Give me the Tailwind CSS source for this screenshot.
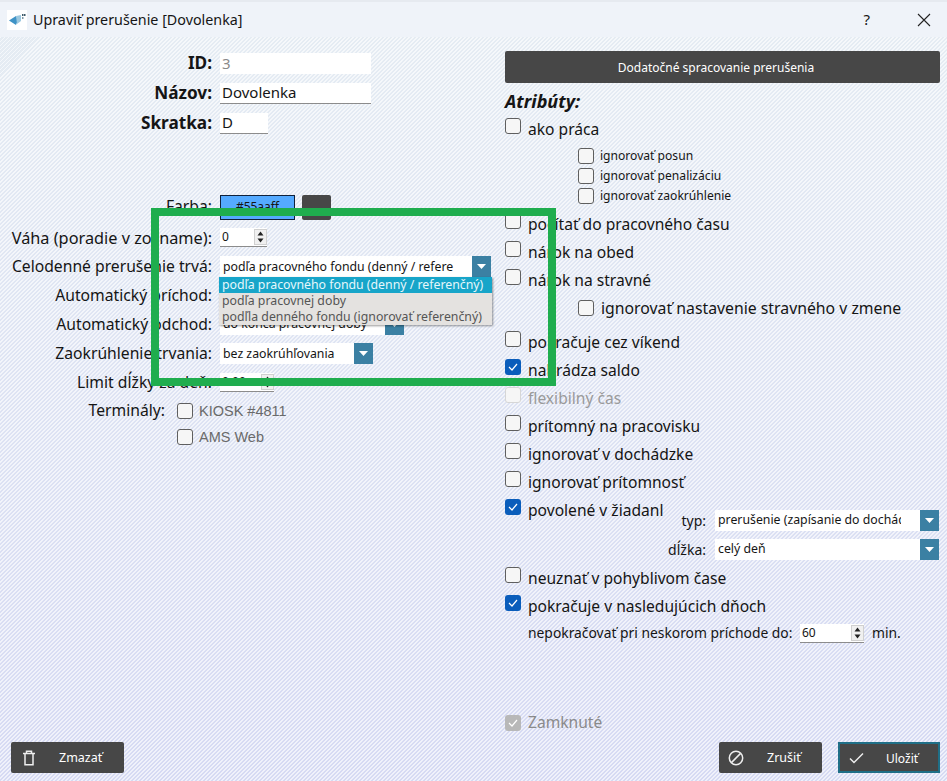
<!DOCTYPE html><html lang="sk">
<head>
  <meta charset="UTF-8">
  <title>Upraviť prerušenie</title>
  <script src="https://cdn.jsdelivr.net/npm/@tailwindcss/browser@4"></script>
</head>
<body class="m-0 overflow-hidden font-['Noto_Sans',sans-serif] text-[#151515]">
<div class="relative flex h-[781px] w-[947px] flex-col overflow-hidden bg-[linear-gradient(180deg,#e6edf3,#d6daf3)]">

  <!-- title bar -->
  <div class="flex h-[37px] shrink-0 items-center border-t-2 border-[#e6eaf0] bg-[#eff3f9] pl-[7px]">
    <div class="flex h-[20px] w-[20px] items-center justify-center bg-white">
      <svg width="18" height="14" viewBox="0 0 18 14"><path d="M1 7.500 L8 3 L10 7 L8 12 Z" fill="#3f93c6"/><path d="M8 3 L13 2 L13 8 L9 11 Z" fill="#9cc8df"/><rect x="14" y="1" width="1.500" height="2" fill="#3e5a6a"/><rect x="16" y="1" width="1.500" height="2" fill="#3e5a6a"/><rect x="14" y="4" width="1.500" height="2" fill="#7f98a6"/></svg>
    </div>
    <span class="ml-[6px] text-[14.300px]">Upraviť prerušenie [Dovolenka]</span>
    <span class="ml-auto text-[15px]">?</span>
    <svg class="mr-[16px] ml-[47px]" width="14" height="14" viewBox="0 0 14 14"><path d="M1 1 L13 13 M13 1 L1 13" stroke="#222" stroke-width="1.100" fill="none"/></svg>
  </div>

  <!-- hatch over the dialog body -->
  <div class="flex min-h-0 flex-1 flex-col bg-[repeating-linear-gradient(135deg,#ffffffa0_0,#ffffffa0_1.4px,transparent_1.4px,transparent_2.83px)]">
    <div class="flex min-h-0 flex-1">

      <!-- left column -->
      <div class="w-[505px] shrink-0 pt-[11px] text-[15.700px]">
        <div class="flex h-[30px] items-center gap-2">
          <span class="w-[212px] text-right text-[17.200px] font-bold">ID:</span>
          <div class="flex h-[21px] w-[151px] items-center bg-white px-[2px] text-[15px] text-[#8a8a8a]">3</div>
        </div>
        <div class="flex h-[30px] items-center gap-2">
          <span class="w-[212px] text-right text-[17.200px] font-bold">Názov:</span>
          <div class="flex h-[21px] w-[151px] items-center border-b border-[#8c8c8c] bg-white px-[2px] text-[15px]">Dovolenka</div>
        </div>
        <div class="flex h-[30px] items-center gap-2">
          <span class="w-[212px] text-right text-[17.200px] font-bold">Skratka:</span>
          <div class="flex h-[21px] w-[48px] items-center border-b border-[#8c8c8c] bg-white px-[2px] text-[15px]">D</div>
        </div>

        <div class="mt-[54px] flex h-[30px] items-center gap-2">
          <span class="w-[212px] text-right">Farba:</span>
          <div class="flex h-[25px] w-[75px] items-center justify-center border border-[#10213a] bg-[#55aaff] text-[12px]">#55aaff</div>
          <div class="ml-[-1px] h-[25px] w-[29px] rounded-[2px] bg-[#474747]"></div>
        </div>
        <div class="flex h-[30px] items-center gap-2 pt-[2px]">
          <span class="w-[212px] text-right text-[16.300px]">Váha (poradie v zozname):</span>
          <div class="mt-[-2px] flex h-[19px] w-[47px] items-center justify-between border-b border-[#8c8c8c] bg-white pl-[2px] text-[12px]">0
            <svg width="13" height="16" viewBox="0 0 13 16"><rect x=".5" y=".5" width="12" height="15" fill="#f0f0f0" stroke="#d0d0d0"/><path d="M3.500 6.500 L6.500 2.500 L9.500 6.500 Z M3.500 9.500 L6.500 13.500 L9.500 9.500 Z" fill="#222"/></svg>
          </div>
        </div>
        <div class="flex h-[29px] items-center gap-2">
          <span class="w-[212px] text-right">Celodenné prerušenie trvá:</span>
          <div class="flex h-[21px] w-[271px] items-center bg-white pl-[3px] text-[12.300px]">
            <span class="flex-1 overflow-hidden pt-[1px] whitespace-nowrap">podľa pracovného fondu (denný / refere</span>
            <div class="flex h-[21px] w-[19px] shrink-0 items-center justify-center bg-[#3b80a3]"><svg width="9" height="5" viewBox="0 0 9 5"><path d="M0 0 H9 L4.500 5 Z" fill="#fff"/></svg></div>
          </div>
        </div>
        <div class="flex h-[29px] items-center gap-2">
          <span class="w-[212px] text-right">Automatický príchod:</span>
          <div class="h-[21px] w-[184px] bg-white"></div>
        </div>
        <div class="flex h-[29px] items-center gap-2">
          <span class="w-[212px] text-right">Automatický odchod:</span>
          <div class="flex h-[21px] w-[184px] items-center bg-white pl-[3px] text-[12.300px]">
            <span class="flex-1 overflow-hidden whitespace-nowrap">do konca pracovnej doby</span>
            <div class="flex h-[21px] w-[19px] shrink-0 items-center justify-center bg-[#3b80a3]"><svg width="9" height="5" viewBox="0 0 9 5"><path d="M0 0 H9 L4.500 5 Z" fill="#fff"/></svg></div>
          </div>
        </div>
        <div class="flex h-[29px] items-center gap-2">
          <span class="w-[212px] text-right">Zaokrúhlenie trvania:</span>
          <div class="flex h-[21px] w-[153px] items-center bg-white pl-[3px] text-[12.300px]">
            <span class="flex-1 overflow-hidden pt-[1px] whitespace-nowrap">bez zaokrúhľovania</span>
            <div class="flex h-[21px] w-[19px] shrink-0 items-center justify-center bg-[#3b80a3]"><svg width="9" height="5" viewBox="0 0 9 5"><path d="M0 0 H9 L4.500 5 Z" fill="#fff"/></svg></div>
          </div>
        </div>
        <div class="flex h-[29px] items-center gap-2">
          <span class="w-[212px] text-right">Limit dĺžky za deň:</span>
          <div class="flex h-[19px] w-[54px] items-center justify-between border-b border-[#8c8c8c] bg-white pl-[2px] text-[12px]">0:00
            <svg width="13" height="16" viewBox="0 0 13 16"><rect x=".5" y=".5" width="12" height="15" fill="#f0f0f0" stroke="#d0d0d0"/><path d="M3.500 6.500 L6.500 2.500 L9.500 6.500 Z M3.500 9.500 L6.500 13.500 L9.500 9.500 Z" fill="#222"/></svg>
          </div>
        </div>
        <div class="flex h-[27px] items-center">
          <span class="w-[165px] text-right">Terminály:</span>
          <span class="ml-[12px] h-[16px] w-[16px] rounded-[3px] border border-[#5f5f5f] bg-[#f6f6f6]"></span>
          <span class="mt-[2px] ml-[6px] font-['Liberation_Sans',sans-serif] text-[14.500px] text-[#6a6a6a]">KIOSK #4811</span>
        </div>
        <div class="flex h-[25px] items-center pl-[177px]">
          <span class="h-[16px] w-[16px] rounded-[3px] border border-[#5f5f5f] bg-[#f6f6f6]"></span>
          <span class="mt-[2px] ml-[6px] font-['Liberation_Sans',sans-serif] text-[14.500px] text-[#6a6a6a]">AMS Web</span>
        </div>
      </div>

      <!-- right column -->
      <div class="flex w-[435px] shrink-0 flex-col pt-[14px] text-[15.600px]">
        <div class="flex h-[32px] items-center justify-center rounded-[2px] bg-[#474747] pt-[1px] pr-[13px] text-[12px] text-white">Dodatočné spracovanie prerušenia</div>
        <div class="mt-[4px] flex h-[28px] items-center text-[18px] font-bold italic">Atribúty:</div>

        <div class="flex h-[28px] items-center gap-[7px] pt-[2px]"><span class="mt-[-8px] h-[16px] w-[16px] rounded-[3px] border border-[#5f5f5f] bg-[#f6f6f6]"></span>ako práca</div>

        <div class="mt-[3px] pl-[73px] text-[12.100px]">
          <div class="flex h-[20px] items-center gap-[6px]"><span class="h-[16px] w-[16px] rounded-[3px] border border-[#5f5f5f] bg-[#f6f6f6]"></span>ignorovať posun</div>
          <div class="flex h-[20px] items-center gap-[6px]"><span class="h-[16px] w-[16px] rounded-[3px] border border-[#5f5f5f] bg-[#f6f6f6]"></span>ignorovať penalizáciu</div>
          <div class="flex h-[20px] items-center gap-[6px]"><span class="h-[16px] w-[16px] rounded-[3px] border border-[#5f5f5f] bg-[#f6f6f6]"></span>ignorovať zaokrúhlenie</div>
        </div>

        <div class="mt-[4px] flex h-[28px] items-center gap-[7px] pt-[2px]"><span class="mt-[-8px] h-[16px] w-[16px] rounded-[3px] border border-[#5f5f5f] bg-[#f6f6f6]"></span>počítať do pracovného času</div>
        <div class="flex h-[28px] items-center gap-[7px] pt-[2px]"><span class="mt-[-8px] h-[16px] w-[16px] rounded-[3px] border border-[#5f5f5f] bg-[#f6f6f6]"></span>nárok na obed</div>
        <div class="flex h-[28px] items-center gap-[7px] pt-[2px]"><span class="mt-[-8px] h-[16px] w-[16px] rounded-[3px] border border-[#5f5f5f] bg-[#f6f6f6]"></span>nárok na stravné</div>
        <div class="flex h-[28px] items-center gap-[7px] pt-[2px] pl-[73px] text-[15.800px]"><span class="mt-[-2px] h-[16px] w-[16px] rounded-[3px] border border-[#5f5f5f] bg-[#f6f6f6]"></span>ignorovať nastavenie stravného v zmene</div>

        <div class="mt-[6px] flex h-[28px] items-center gap-[7px] pt-[2px]"><span class="mt-[-8px] h-[16px] w-[16px] rounded-[3px] border border-[#5f5f5f] bg-[#f6f6f6]"></span>pokračuje cez víkend</div>
        <div class="flex h-[28px] items-center gap-[7px] pt-[2px]"><span class="mt-[-8px] flex h-[16px] w-[16px] items-center justify-center rounded-[3px] bg-[#0a5dbb]"><svg width="10" height="8" viewBox="0 0 10 8"><path d="M1 4 L4 7 L9 1" stroke="#fff" stroke-width="1.200" fill="none"/></svg></span>nahrádza saldo</div>
        <div class="flex h-[28px] items-center gap-[7px] pt-[2px] text-[#9a9a9a]"><span class="mt-[-8px] h-[16px] w-[16px] rounded-[3px] border border-[#d6d6d6] bg-[#f6f6f6]"></span>flexibilný čas</div>
        <div class="flex h-[28px] items-center gap-[7px] pt-[2px]"><span class="mt-[-8px] h-[16px] w-[16px] rounded-[3px] border border-[#5f5f5f] bg-[#f6f6f6]"></span>prítomný na pracovisku</div>
        <div class="flex h-[28px] items-center gap-[7px] pt-[2px]"><span class="mt-[-8px] h-[16px] w-[16px] rounded-[3px] border border-[#5f5f5f] bg-[#f6f6f6]"></span>ignorovať v dochádzke</div>
        <div class="flex h-[28px] items-center gap-[7px] pt-[2px]"><span class="mt-[-8px] h-[16px] w-[16px] rounded-[3px] border border-[#5f5f5f] bg-[#f6f6f6]"></span>ignorovať prítomnosť</div>

        <div class="flex h-[68px] justify-between">
          <div class="flex h-[28px] w-[175px] items-center gap-[7px] overflow-hidden pt-[2px] whitespace-nowrap"><span class="mt-[-8px] flex h-[16px] w-[16px] shrink-0 items-center justify-center rounded-[3px] bg-[#0a5dbb]"><svg width="10" height="8" viewBox="0 0 10 8"><path d="M1 4 L4 7 L9 1" stroke="#fff" stroke-width="1.200" fill="none"/></svg></span>povolené v žiadanl</div>
          <div class="flex flex-col gap-[8px] pt-[14px] pr-[1px] text-[12.300px]">
            <div class="flex h-[21px] items-center gap-[9px]">
              <span class="w-[40px] text-right text-[14px]">typ:</span>
              <div class="flex h-[21px] w-[224px] items-center bg-white pl-[3px]">
                <span class="w-[183px] overflow-hidden whitespace-nowrap">prerušenie (zapísanie do dochádzky)</span>
                <div class="ml-auto flex h-[21px] w-[19px] items-center justify-center bg-[#3b80a3]"><svg width="9" height="5" viewBox="0 0 9 5"><path d="M0 0 H9 L4.500 5 Z" fill="#fff"/></svg></div>
              </div>
            </div>
            <div class="flex h-[21px] items-center gap-[9px]">
              <span class="w-[40px] text-right text-[14px]">dĺžka:</span>
              <div class="flex h-[21px] w-[224px] items-center bg-white pl-[3px]">
                <span>celý deň</span>
                <div class="ml-auto flex h-[21px] w-[19px] items-center justify-center bg-[#3b80a3]"><svg width="9" height="5" viewBox="0 0 9 5"><path d="M0 0 H9 L4.500 5 Z" fill="#fff"/></svg></div>
              </div>
            </div>
          </div>
        </div>

        <div class="flex h-[28px] items-center gap-[7px] pt-[2px]"><span class="mt-[-8px] h-[16px] w-[16px] rounded-[3px] border border-[#5f5f5f] bg-[#f6f6f6]"></span>neuznať v pohyblivom čase</div>
        <div class="flex h-[28px] items-center gap-[7px] pt-[2px]"><span class="mt-[-8px] flex h-[16px] w-[16px] items-center justify-center rounded-[3px] bg-[#0a5dbb]"><svg width="10" height="8" viewBox="0 0 10 8"><path d="M1 4 L4 7 L9 1" stroke="#fff" stroke-width="1.200" fill="none"/></svg></span>pokračuje v nasledujúcich dňoch</div>
        <div class="flex h-[26px] items-center pl-[23px] text-[13.850px]">
          <span class="w-[272px]">nepokračovať pri neskorom príchode do:</span>
          <div class="flex h-[19px] w-[64px] items-center justify-between border-b border-[#8c8c8c] bg-white pl-[2px] text-[12px]">60
            <svg width="13" height="16" viewBox="0 0 13 16"><rect x=".5" y=".5" width="12" height="15" fill="#f0f0f0" stroke="#d0d0d0"/><path d="M3.500 6.500 L6.500 2.500 L9.500 6.500 Z M3.500 9.500 L6.500 13.500 L9.500 9.500 Z" fill="#222"/></svg>
          </div>
          <span class="ml-[8px]">min.</span>
        </div>

        <div class="mt-auto flex h-[28px] items-center gap-[7px] text-[#8a8a8a]"><span class="flex h-[16px] w-[16px] items-center justify-center rounded-[3px] bg-[#b8b8b8]"><svg width="10" height="8" viewBox="0 0 10 8"><path d="M1 4 L4 7 L9 1" stroke="#fff" stroke-width="1.200" fill="none"/></svg></span>Zamknuté</div>
      </div>
    </div>

    <!-- footer buttons -->
    <div class="flex h-[44px] shrink-0 items-start px-[7px] pt-[5px] pl-[11px] text-[12.500px] text-white">
      <div class="flex h-[31px] w-[113px] items-center rounded-[2px] bg-[#474747] pl-[11px]">
        <svg width="14" height="16" viewBox="0 0 14 16" fill="none" stroke="#eee" stroke-width="1.500"><path d="M1 3.500 H13 M4.500 3 V1.200 H9.500 V3 M3 3.500 V14.800 H11 V3.500"/></svg>
        <span class="mt-[2px] ml-[23px]">Zmazať</span>
      </div>
      <div class="ml-auto flex h-[31px] w-[103px] items-center rounded-[2px] bg-[#474747] pl-[9px]">
        <svg width="16" height="16" viewBox="0 0 16 16" fill="none" stroke="#eee" stroke-width="1.500"><circle cx="8" cy="8" r="6.700"/><path d="M3.400 12.600 L12.600 3.400"/></svg>
        <span class="mt-[2px] ml-[23px]">Zrušiť</span>
      </div>
      <div class="ml-[16px] flex h-[31px] w-[102px] items-center border-2 border-[#1f6f87] bg-[#474747] pl-[9px]">
        <svg width="15" height="12" viewBox="0 0 15 12" fill="none" stroke="#eee" stroke-width="1.500"><path d="M1 6.500 L5 10.500 L14 1.500"/></svg>
        <span class="mt-[2px] ml-[22px] text-[12px]">Uložiť</span>
      </div>
    </div>
  </div>

  <!-- open dropdown list -->
  <div class="absolute top-[277px] left-[219px] w-[273px] bg-[#e4e2e0] text-[12.300px] leading-[16px] text-[#555] shadow-[1px_1px_2px_#0006]">
    <div class="bg-[#17a5c9] pl-[3px] text-[#e6f7fb]">podľa pracovného fondu (denný / referenčný)</div>
    <div class="pl-[3px]">podľa pracovnej doby</div>
    <div class="pl-[3px]">podľla denného fondu (ignorovať referenčný)</div>
  </div>

  <!-- green highlight drawn on top of the screenshot -->
  <div class="absolute top-[208px] left-[151px] h-[178px] w-[405px] border-[8px] border-[#1fad4e]"></div>
</div>
</body>
</html>
